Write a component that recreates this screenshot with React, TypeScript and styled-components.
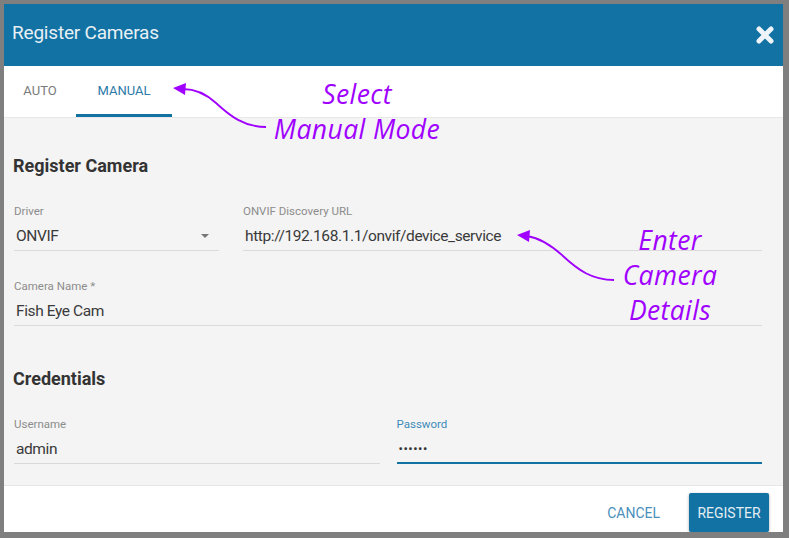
import React from 'react';
import styled, { createGlobalStyle } from 'styled-components';

const GlobalStyle = createGlobalStyle`
  html, body {
    margin: 0;
    padding: 0;
    background: #7f7f7f;
  }
  * {
    box-sizing: border-box;
  }
`;

const Frame = styled.div`
  position: relative;
  width: 789px;
  height: 538px;
  padding: 4px 6px 6px 4px;
  font-family: Roboto, "Liberation Sans", Arial, sans-serif;
`;

const Dialog = styled.div`
  display: flex;
  flex-direction: column;
  height: 100%;
  background: #ffffff;
  overflow: hidden;
`;

const Header = styled.header`
  display: flex;
  align-items: center;
  justify-content: space-between;
  height: 62px;
  padding: 0 8px 0 8px;
  background: #1172a3;
`;

const Title = styled.h1`
  margin: 0 0 6px;
  font-size: 19px;
  font-weight: 400;
  color: #e8f0f5;
  letter-spacing: -0.2px;
`;

const CloseButton = styled.button`
  display: flex;
  align-items: center;
  justify-content: center;
  width: 20px;
  height: 20px;
  padding: 0;
  border: none;
  background: none;
  cursor: pointer;
`;

const TabBar = styled.nav`
  display: flex;
  height: 52px;
  background: #ffffff;
  border-bottom: 1px solid #e8e8e8;
`;

const Tab = styled.div<{ $active?: boolean; $width: number }>`
  display: flex;
  align-items: center;
  justify-content: center;
  width: ${p => p.$width}px;
  padding-top: 1px;
  font-size: 13px;
  color: ${p => (p.$active ? '#2b7aa8' : '#7a7a7a')};
  border-bottom: 3px solid ${p => (p.$active ? '#1172a3' : 'transparent')};
`;

const Body = styled.main`
  flex: 1;
  padding: 38px 21px 0 10px;
  background: #f4f4f4;
`;

const SectionTitle = styled.h2<{ $top?: number }>`
  margin: ${p => p.$top ?? 0}px 0 28px -1px;
  font-size: 18px;
  line-height: 20px;
  font-weight: 700;
  color: #333333;
`;

const Row = styled.div<{ $columns: string; $gap: number }>`
  display: grid;
  grid-template-columns: ${p => p.$columns};
  column-gap: ${p => p.$gap}px;
  margin-bottom: 28px;

  &:last-child {
    margin-bottom: 0;
  }
`;

const Field = styled.div`
  display: flex;
  flex-direction: column;
`;

const Label = styled.label<{ $focused?: boolean }>`
  font-size: 11.5px;
  line-height: 14px;
  color: ${p => (p.$focused ? '#3d8bb8' : '#8c8c8c')};
`;

const Value = styled.div<{ $focused?: boolean }>`
  display: flex;
  align-items: center;
  justify-content: space-between;
  height: 33px;
  padding: 8px 2px 4px;
  font-size: 15.5px;
  letter-spacing: -0.4px;
  line-height: 20px;
  color: #3a3a3a;
  border-bottom: ${p => (p.$focused ? '2px solid #1172a3' : '1px solid #dadada')};
`;

const Caret = styled.span`
  width: 0;
  height: 0;
  margin-right: 8px;
  border-left: 4px solid transparent;
  border-right: 4px solid transparent;
  border-top: 4px solid #777777;
`;

const Dots = styled.span`
  font-size: 13px;
  letter-spacing: 0.5px;
  color: #333333;
`;

const Footer = styled.footer`
  display: flex;
  align-items: flex-start;
  justify-content: flex-end;
  gap: 13px;
  height: 47px;
  padding: 7px 14px 0 0;
  background: #ffffff;
  border-top: 1px solid #e6e6e6;
`;

const FlatButton = styled.button`
  height: 39px;
  padding: 0 16px;
  border: none;
  background: none;
  font-family: inherit;
  font-size: 14px;
  color: #4a8fbb;
`;

const RaisedButton = styled.button`
  height: 39px;
  width: 80px;
  border: none;
  border-radius: 2px;
  background: #1172a3;
  box-shadow: 0 1px 3px rgba(0, 0, 0, 0.35);
  font-family: inherit;
  font-size: 14px;
  color: #e3edf4;
`;

const Note = styled.div<{ $x: number; $y: number }>`
  position: absolute;
  left: ${p => p.$x}px;
  top: ${p => p.$y}px;
  transform: translateX(-50%);
  font-family: "Open Sans", "Noto Sans", sans-serif;
  font-style: italic;
  font-size: 26.5px;
  letter-spacing: 0.4px;
  line-height: 35px;
  color: #a000ff;
  text-align: center;
  white-space: nowrap;
  pointer-events: none;
`;

const ArrowLayer = styled.svg`
  position: absolute;
  left: 0;
  top: 0;
  width: 789px;
  height: 538px;
  pointer-events: none;
`;

const CloseIcon = () => (
  <svg width="20" height="20" viewBox="0 0 20 20">
    <path d="M4 4 L16 16 M16 4 L4 16" stroke="#eef4f8" strokeWidth="5" strokeLinecap="round" />
  </svg>
);

export default function App() {
  return (
    <>
      <GlobalStyle />
      <Frame>
        <Dialog>
          <Header>
            <Title>Register Cameras</Title>
            <CloseButton aria-label="close">
              <CloseIcon />
            </CloseButton>
          </Header>

          <TabBar>
            <Tab $width={72}>AUTO</Tab>
            <Tab $width={96} $active>MANUAL</Tab>
          </TabBar>

          <Body>
            <SectionTitle>Register Camera</SectionTitle>
            <Row $columns="205px 1fr" $gap={24}>
              <Field>
                <Label>Driver</Label>
                <Value>
                  ONVIF
                  <Caret />
                </Value>
              </Field>
              <Field>
                <Label>ONVIF Discovery URL</Label>
                <Value>http://192.168.1.1/onvif/device_service</Value>
              </Field>
            </Row>
            <Row $columns="1fr" $gap={0}>
              <Field>
                <Label>Camera Name *</Label>
                <Value>Fish Eye Cam</Value>
              </Field>
            </Row>

            <SectionTitle $top={43}>Credentials</SectionTitle>
            <Row $columns="1fr 1fr" $gap={17}>
              <Field>
                <Label>Username</Label>
                <Value>admin</Value>
              </Field>
              <Field>
                <Label $focused>Password</Label>
                <Value $focused>
                  <Dots>••••••</Dots>
                </Value>
              </Field>
            </Row>
          </Body>

          <Footer>
            <FlatButton>CANCEL</FlatButton>
            <RaisedButton>REGISTER</RaisedButton>
          </Footer>
        </Dialog>

        <Note $x={357} $y={77}>
          Select
          <br />
          Manual Mode
        </Note>
        <Note $x={670} $y={223}>
          Enter
          <br />
          Camera
          <br />
          Details
        </Note>

        <ArrowLayer viewBox="0 0 789 538">
          <path
            d="M266 127 C244 127 230 116 216 103 C204 92 194 89 183 89"
            fill="none"
            stroke="#a000ff"
            strokeWidth="1.8"
          />
          <path d="M173 88 L186 83 L185 95 Z" fill="#a000ff" />
          <path
            d="M614 280 C592 280 578 270 563 256 C551 245 540 238 527 236"
            fill="none"
            stroke="#a000ff"
            strokeWidth="1.8"
          />
          <path d="M517 235 L530 230 L529 242 Z" fill="#a000ff" />
        </ArrowLayer>
      </Frame>
    </>
  );
}
